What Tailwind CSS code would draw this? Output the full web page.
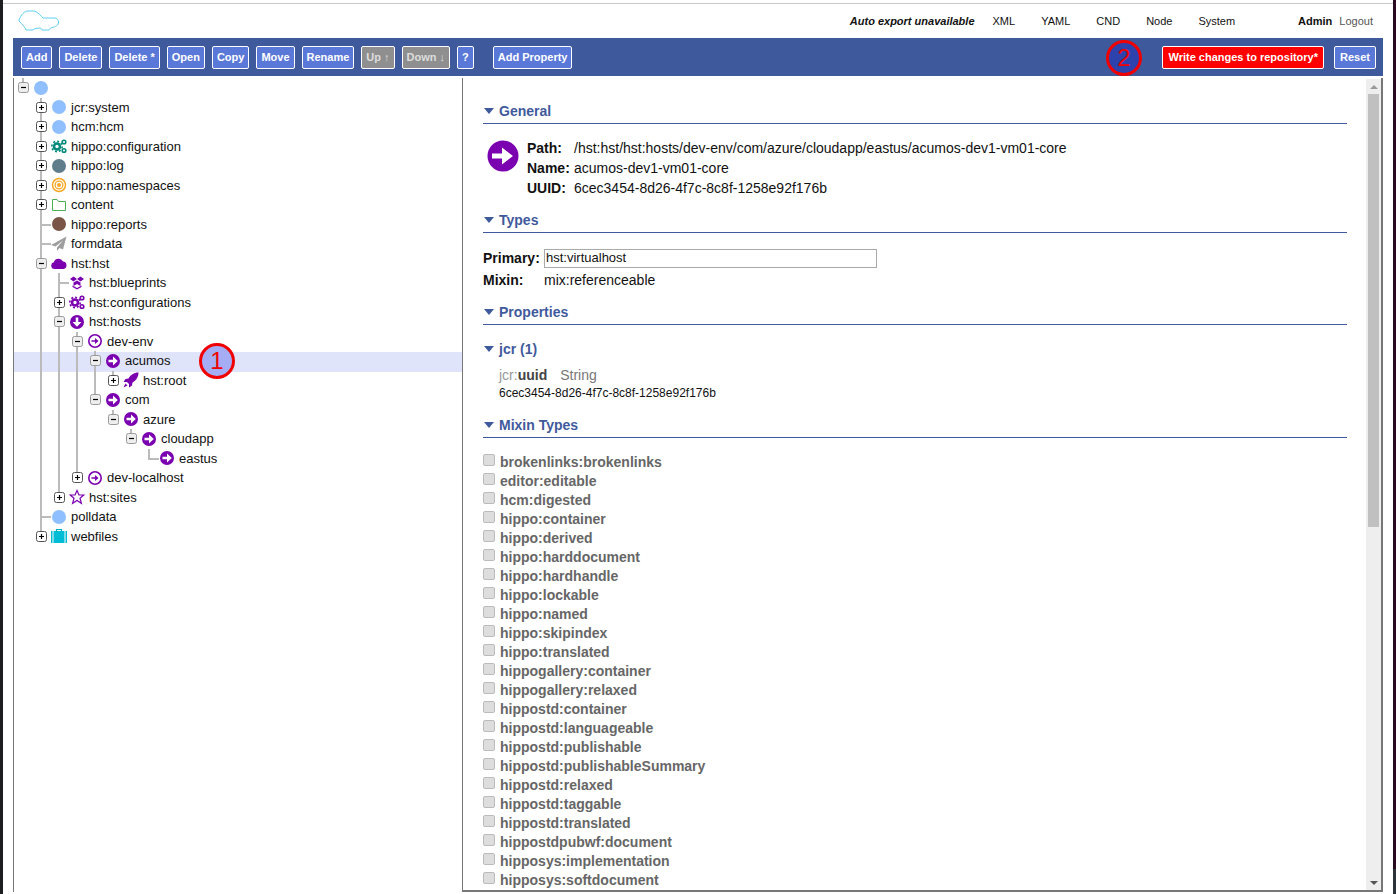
<!DOCTYPE html>
<html lang="en">
<head>
    <meta charset="UTF-8">
    <title>Repository Console</title>
    <script src="https://cdn.jsdelivr.net/npm/@tailwindcss/browser@4"></script>
</head>
<body class="h-[894px] overflow-hidden flex bg-[#1c1f1f] font-['Liberation_Sans',Arial,sans-serif] text-[#111]">

    <div class="w-[3px] shrink-0 bg-[#1c1f1f]"></div>

    <div class="w-[1390px] shrink-0 bg-white flex flex-col h-[894px]">
        <div class="h-[4px] shrink-0 border-b border-[#c8c8c8]"></div>

        <!-- Top navigation -->
        <header class="h-[34px] shrink-0 flex items-center pl-[11px] pr-[20px] text-[11px]">
            <svg width="50" height="34" viewBox="0 0 50 34" class="mt-[4px]" fill="none" stroke="#5fd0f0" stroke-width="1">
                <path d="M5 14C7 9 10 5 14 5L20 5C24 6 27 10 29 12L40 12C43 12 45 14 44.5 17C44 20 40 21 36.500 22L35 24L28 24L26.500 22L21 22.500L19 24L12 24C11 21 9 19 5 15Z"/>
            </svg>
            <span class="ml-auto font-bold italic">Auto export unavailable</span>
            <span class="ml-[18px]">XML</span>
            <span class="ml-[26px]">YAML</span>
            <span class="ml-[26px]">CND</span>
            <span class="ml-[26px]">Node</span>
            <span class="ml-[26px]">System</span>
            <span class="ml-[63px] font-bold">Admin</span>
            <span class="ml-[7px] text-[#555]">Logout</span>
        </header>

        <!-- Toolbar -->
        <div class="mx-[10px] h-[38px] shrink-0 bg-[#3f5a9c] flex items-center pl-[8px] pr-[7px] gap-[7px] text-[11px] font-bold text-white relative">
            <button class="h-[23px] px-[4px] bg-[#5a78d8] border border-white rounded-[2px]">Add</button>
            <button class="h-[23px] px-[4px] bg-[#5a78d8] border border-white rounded-[2px]">Delete</button>
            <button class="h-[23px] px-[4px] bg-[#5a78d8] border border-white rounded-[2px]">Delete *</button>
            <button class="h-[23px] px-[4px] bg-[#5a78d8] border border-white rounded-[2px]">Open</button>
            <button class="h-[23px] px-[4px] bg-[#5a78d8] border border-white rounded-[2px]">Copy</button>
            <button class="h-[23px] px-[4px] bg-[#5a78d8] border border-white rounded-[2px]">Move</button>
            <button class="h-[23px] px-[4px] bg-[#5a78d8] border border-white rounded-[2px]">Rename</button>
            <button class="h-[23px] px-[4px] bg-[#8f8f8f] border border-white rounded-[2px] text-[#ddd]">Up ↑</button>
            <button class="h-[23px] px-[4px] bg-[#8f8f8f] border border-white rounded-[2px] text-[#ddd]">Down ↓</button>
            <button class="h-[23px] px-[4px] bg-[#5a78d8] border border-white rounded-[2px]">?</button>
            <button class="ml-[12px] h-[23px] px-[4px] bg-[#5a78d8] border border-white rounded-[2px]">Add Property</button>
            <button class="ml-auto h-[23px] px-[5px] bg-[#ff0000] border border-white rounded-[2px]">Write changes to repository*</button>
            <button class="ml-[3px] h-[23px] px-[5px] bg-[#5a78d8] border border-white rounded-[2px]">Reset</button>
            <!-- Annotation 2 -->
            <div class="absolute left-[1093px] top-[2px] w-[36px] h-[36px] rounded-full border-[3px] border-[#f00000] bg-[#2e42ad] flex items-center justify-center text-[#f00000] text-[24px] font-normal">2</div>
        </div>

        <!-- Panels -->
        <div class="mx-[10px] mt-[2px] h-[814px] shrink-0 flex">
            <!-- Node tree -->
            <div id="tree" class="isolate w-[450px] shrink-0 h-full border-l border-[#777] border-r text-[13px] relative"></div>

            <!-- Node details -->
            <div class="flex-1 min-w-0 flex border-b-2 border-r-2 border-[#777] h-full">
                <div class="flex-1 min-w-0 overflow-hidden pl-[20px] pr-[19px] pt-[22px] text-[14px] leading-[20px]">
                    <h2 class="flex items-center h-[22px] pb-[1px] border-b border-[#3f5a9c] box-content text-[#3f5a9c] font-bold"><span class="w-0 h-0 border-x-[5px] border-x-transparent border-t-[6px] border-t-[#3f5a9c] ml-[1px] mr-[5px]"></span>General</h2>
                    <div class="flex mt-[14px] h-[60px]">
                        <svg width="32" height="32" viewBox="0 0 32 32" class="mt-[2px] ml-[4px] mr-[8px]">
                            <circle cx="16" cy="16" r="15.5" fill="#7b00b0"/>
                            <path d="M5 13.5 H15 V7.5 L26 16 L15 24.5 V18.5 H5 Z" fill="#fff"/>
                        </svg>
                        <div class="grid grid-cols-[47px_1fr]">
                            <b>Path:</b><span>/hst:hst/hst:hosts/dev-env/com/azure/cloudapp/eastus/acumos-dev1-vm01-core</span>
                            <b>Name:</b><span>acumos-dev1-vm01-core</span>
                            <b>UUID:</b><span>6cec3454-8d26-4f7c-8c8f-1258e92f176b</span>
                        </div>
                    </div>
                    <h2 class="flex items-center h-[22px] mt-[11px] pb-[1px] border-b border-[#3f5a9c] box-content text-[#3f5a9c] font-bold"><span class="w-0 h-0 border-x-[5px] border-x-transparent border-t-[6px] border-t-[#3f5a9c] ml-[1px] mr-[5px]"></span>Types</h2>
                    <div class="grid grid-cols-[61px_333px] items-center mt-[15px] gap-y-[2px]">
                        <b>Primary:</b>
                        <input value="hst:virtualhost" class="h-[19px] border border-[#aaa] px-[1px] text-[13px] text-[#111]">
                        <b>Mixin:</b>
                        <span>mix:referenceable</span>
                    </div>
                    <h2 class="flex items-center h-[22px] mt-[11px] pb-[1px] border-b border-[#3f5a9c] box-content text-[#3f5a9c] font-bold"><span class="w-0 h-0 border-x-[5px] border-x-transparent border-t-[6px] border-t-[#3f5a9c] ml-[1px] mr-[5px]"></span>Properties</h2>
                    <h3 class="flex items-center h-[22px] mt-[13px] text-[#3f5a9c] font-bold"><span class="w-0 h-0 border-x-[5px] border-x-transparent border-t-[6px] border-t-[#3f5a9c] ml-[1px] mr-[5px]"></span>jcr (1)</h3>
                    <div class="pl-[16px] mt-[5px]">
                        <div><span class="text-[#999]">jcr:</span><b class="text-[#444]">uuid</b><span class="ml-[13px] text-[#777]">String</span></div>
                        <div class="text-[12px] leading-[16px]">6cec3454-8d26-4f7c-8c8f-1258e92f176b</div>
                    </div>
                    <h2 class="flex items-center h-[22px] mt-[13px] pb-[1px] border-b border-[#3f5a9c] box-content text-[#3f5a9c] font-bold"><span class="w-0 h-0 border-x-[5px] border-x-transparent border-t-[6px] border-t-[#3f5a9c] ml-[1px] mr-[5px]"></span>Mixin Types</h2>
                    <ul id="mixins" class="mt-[14px]"></ul>
                </div>
                <!-- Scrollbar -->
                <div class="w-[15px] shrink-0 bg-[#eeeeee] flex flex-col items-center mt-[1px]">
                    <div class="h-[15px] shrink-0 flex items-center justify-center"><span class="w-0 h-0 border-x-[4px] border-x-transparent border-b-[4px] border-b-[#999]"></span></div>
                    <div class="w-[11px] h-[433px] bg-[#c0c0c0]"></div>
                    <div class="mt-auto h-[15px] shrink-0 flex items-center justify-center"><span class="w-0 h-0 border-x-[4px] border-x-transparent border-t-[4px] border-t-[#555]"></span></div>
                </div>
            </div>
        </div>
    </div>

    <div class="w-[3px] shrink-0 flex flex-col">
        <div class="h-[869px] bg-[#2a0a20]"></div>
        <div class="flex-1 bg-[#2b3338]"></div>
    </div>

    <script>
    // --- ICONS ---
    const arrowRight = '<path d="M3.5 6.7H8V3.5L12.8 8 8 12.5V9.3H3.5Z" fill="#fff"/>';
    const icons = {
        blue: '<circle cx="8" cy="8" r="7" fill="#90bfff"/>',
        slate: '<circle cx="8" cy="8" r="7" fill="#607d8b"/>',
        brown: '<circle cx="8" cy="8" r="7" fill="#795548"/>',
        gears: c => `<g fill="none" stroke="${c}"><circle cx="6" cy="8.5" r="3" stroke-width="2.6"/><circle cx="6" cy="8.5" r="5.2" stroke-width="1.6" stroke-dasharray="2 2"/><circle cx="13" cy="4" r="1.8" stroke-width="1.6"/><circle cx="13" cy="12.5" r="1.8" stroke-width="1.6"/></g>`,
        target: '<g fill="none" stroke="#f9a825"><circle cx="8" cy="8" r="6.5" stroke-width="1.5"/><circle cx="8" cy="8" r="3.9" stroke-width="1.3"/></g><circle cx="8" cy="8" r="2" fill="#f9a825"/>',
        folder: '<path d="M1.5 13.5V2.5H6L7.5 4.5H14.5V13.5Z" fill="none" stroke="#4caf50" stroke-width="1"/>',
        plane: '<path d="M15.5 .5 0 9l4.5 1.5L12 4.5 6 11.5V15l2.5-3 3.5 1.5Z" fill="#9e9e9e"/>',
        cloud: '<path d="M3.500 14A3.400 3.400 0 0 1 2.800 7.300 5 5 0 0 1 12 6.500 3.800 3.800 0 0 1 12.500 14Z" fill="#7b00b0"/>',
        dropbox: '<path d="M4.5 1.5 8 4 4.5 6.5 1 4ZM11.500 1.500 15 4 11.500 6.500 8 4ZM4.500 7.500 8 5.500 8 9 4.500 11ZM11.500 7.500 8 5.500 8 9 11.500 11ZM3.500 10.500 8 13 12.500 10.500 12.500 12 8 14.500 3.500 12Z" fill="#7b00b0"/>',
        down: '<circle cx="8" cy="8" r="7" fill="#7b00b0"/><path d="M6.700 3.500V8H3.500L8 12.800 12.500 8H9.300V3.500Z" fill="#fff"/>',
        rightOutline: '<circle cx="8" cy="8" r="6.200" fill="none" stroke="#7b00b0" stroke-width="1.600"/><path d="M4.500 7.200H8V5L11.500 8 8 11V8.800H4.500Z" fill="#7b00b0"/>',
        right: '<circle cx="8" cy="8" r="7" fill="#7b00b0"/>' + arrowRight,
        rocket: '<path d="M15.500 .5C11 .5 7.500 3 5.500 6.500L2.500 7 .5 10H4L6 12V15.500L9 13.500 9.500 10.500C13 8.500 15.500 5 15.500 .5ZM2.500 11.500 .5 15.500 4.500 13.500Z" fill="#7b00b0"/>',
        star: '<path d="M8 1.500 10 6H14.800L11 9.200 12.400 14.300 8 11.500 3.600 14.300 5 9.200 1.200 6H6Z" fill="none" stroke="#7b00b0" stroke-width="1.200"/>',
        suitcase: '<path d="M5.500 3V1.500H10.500V3" fill="none" stroke="#00acc1" stroke-width="1.200"/><rect x="2.500" y="3" width="11" height="12" fill="#00bcd4"/><rect x="0" y="3" width="1.500" height="12" fill="#00bcd4"/><rect x="14.500" y="3" width="1.500" height="12" fill="#00bcd4"/>'
    };

    // --- TREE DATA ---
    // guides: ancestor levels that still continue; link: T (more siblings) or L (last child)
    const nodes = [
        { depth: 0, link: 'L', toggle: 'minus', icon: icons.blue, label: '' },
        { depth: 1, guides: [], link: 'T', toggle: 'plus', icon: icons.blue, label: 'jcr:system' },
        { depth: 1, guides: [], link: 'T', toggle: 'plus', icon: icons.blue, label: 'hcm:hcm' },
        { depth: 1, guides: [], link: 'T', toggle: 'plus', icon: icons.gears('#00897b'), label: 'hippo:configuration' },
        { depth: 1, guides: [], link: 'T', toggle: 'plus', icon: icons.slate, label: 'hippo:log' },
        { depth: 1, guides: [], link: 'T', toggle: 'plus', icon: icons.target, label: 'hippo:namespaces' },
        { depth: 1, guides: [], link: 'T', toggle: 'plus', icon: icons.folder, label: 'content' },
        { depth: 1, guides: [], link: 'T', icon: icons.brown, label: 'hippo:reports' },
        { depth: 1, guides: [], link: 'T', icon: icons.plane, label: 'formdata' },
        { depth: 1, guides: [], link: 'T', toggle: 'minus', icon: icons.cloud, label: 'hst:hst' },
        { depth: 2, guides: [1], link: 'T', icon: icons.dropbox, label: 'hst:blueprints' },
        { depth: 2, guides: [1], link: 'T', toggle: 'plus', icon: icons.gears('#7b00b0'), label: 'hst:configurations' },
        { depth: 2, guides: [1], link: 'T', toggle: 'minus', icon: icons.down, label: 'hst:hosts' },
        { depth: 3, guides: [1, 2], link: 'T', toggle: 'minus', icon: icons.rightOutline, label: 'dev-env' },
        { depth: 4, guides: [1, 2, 3], link: 'T', toggle: 'minus', icon: icons.right, label: 'acumos', selected: true },
        { depth: 5, guides: [1, 2, 3, 4], link: 'L', toggle: 'plus', icon: icons.rocket, label: 'hst:root' },
        { depth: 4, guides: [1, 2, 3], link: 'L', toggle: 'minus', icon: icons.right, label: 'com' },
        { depth: 5, guides: [1, 2, 3], link: 'L', toggle: 'minus', icon: icons.right, label: 'azure' },
        { depth: 6, guides: [1, 2, 3], link: 'L', toggle: 'minus', icon: icons.right, label: 'cloudapp' },
        { depth: 7, guides: [1, 2, 3], link: 'L', icon: icons.right, label: 'eastus' },
        { depth: 3, guides: [1, 2], link: 'L', toggle: 'plus', icon: icons.rightOutline, label: 'dev-localhost' },
        { depth: 2, guides: [1], link: 'L', toggle: 'plus', icon: icons.star, label: 'hst:sites' },
        { depth: 1, guides: [], link: 'T', icon: icons.blue, label: 'polldata' },
        { depth: 1, guides: [], link: 'L', toggle: 'plus', icon: icons.suitcase, label: 'webfiles' }
    ];

    const mixins = ['brokenlinks:brokenlinks', 'editor:editable', 'hcm:digested', 'hippo:container', 'hippo:derived', 'hippo:harddocument', 'hippo:hardhandle', 'hippo:lockable', 'hippo:named', 'hippo:skipindex', 'hippo:translated', 'hippogallery:container', 'hippogallery:relaxed', 'hippostd:container', 'hippostd:languageable', 'hippostd:publishable', 'hippostd:publishableSummary', 'hippostd:relaxed', 'hippostd:taggable', 'hippostd:translated', 'hippostdpubwf:document', 'hipposys:implementation', 'hipposys:softdocument'];

    const vLine = 'absolute left-[8px] top-0 w-[2px] h-full bg-[#bbb]';
    const vHalf = 'absolute left-[8px] top-0 w-[2px] h-1/2 bg-[#bbb]';
    const hLine = 'absolute left-[8px] top-[9px] w-[11px] h-[2px] bg-[#bbb]';

    function toggleBox(kind) {
        const bar = kind === 'plus' ? '<path d="M3 5.500H8M5.500 3V8" stroke="#000" stroke-width="1.200"/>' : '<path d="M3 5.500H8" stroke="#000" stroke-width="1.200"/>';
        const fill = kind === 'plus' ? '#fff' : '#eee';
        const edge = kind === 'plus' ? '#555' : '#999';
        return `<svg width="11" height="11" viewBox="0 0 11 11" class="absolute left-[4px] top-[4px]"><rect x=".5" y=".5" width="10" height="10" rx="2" fill="${fill}" stroke="${edge}"/>${bar}</svg>`;
    }

    function renderRow(node) {
        let cells = '';
        for (let level = 0; level < node.depth; level++) {
            const guide = (node.guides || []).includes(level) ? `<span class="${vLine}"></span>` : '';
            cells += `<span class="relative w-[18px] h-full shrink-0">${guide}</span>`;
        }
        const stem = node.link === 'T' ? vLine : vHalf;
        const connector = node.toggle ? toggleBox(node.toggle) : `<span class="${hLine}"></span>`;
        // the highlight sits one pixel below the row box
        const highlight = node.selected ? '<span class="absolute inset-x-0 top-[1px] h-[20px] -z-10 bg-[#e0e4fb]"></span>' : '';
        return `<div class="relative flex items-center h-[19.5px]">${highlight}${cells}
            <span class="relative w-[18px] h-full shrink-0"><span class="${stem}"></span>${connector}</span>
            <svg width="16" height="16" viewBox="0 0 16 16" class="shrink-0 ml-[1px] mr-[2px]">${node.icon}</svg>
            <span class="ml-[2px] whitespace-nowrap">${node.label}</span></div>`;
    }

    document.getElementById('tree').innerHTML = '<div class="absolute top-[265px] left-[185px] w-[36px] h-[36px] rounded-full border-[3px] border-[#f00000] bg-[#a5adf5] flex items-center justify-center text-[#f00000] text-[24px] z-10">1</div>' + nodes.map(renderRow).join('');

    document.getElementById('mixins').innerHTML = mixins.map(name =>
        `<li class="flex items-center h-[19px] font-bold text-[#666]"><span class="w-[12px] h-[12px] mr-[5px] mb-[3px] bg-[#ddd] border border-[#bbb] rounded-[2px]"></span>${name}</li>`
    ).join('');
    </script>
</body>
</html>
